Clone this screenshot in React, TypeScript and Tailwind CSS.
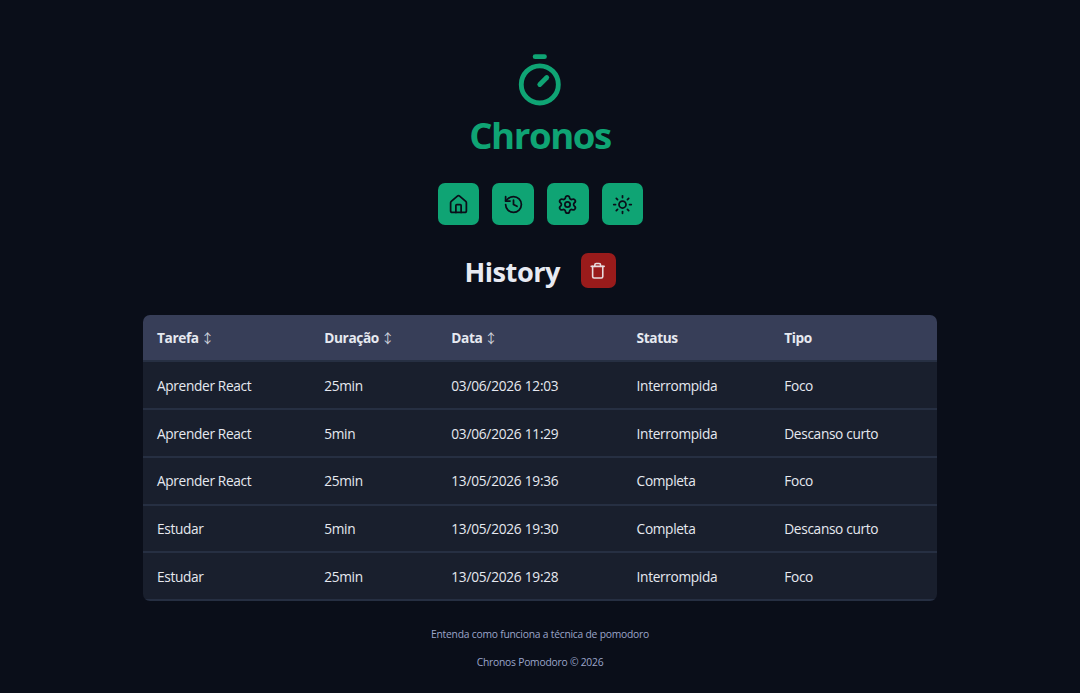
import { History, House, Settings, Sun, Timer, Trash } from "lucide-react";

interface Task {
  name: string;
  duration: string;
  date: string;
  status: string;
  type: string;
}

const tasks: Task[] = [
  { name: "Aprender React", duration: "25min", date: "03/06/2026 12:03", status: "Interrompida", type: "Foco" },
  { name: "Aprender React", duration: "5min", date: "03/06/2026 11:29", status: "Interrompida", type: "Descanso curto" },
  { name: "Aprender React", duration: "25min", date: "13/05/2026 19:36", status: "Completa", type: "Foco" },
  { name: "Estudar", duration: "5min", date: "13/05/2026 19:30", status: "Completa", type: "Descanso curto" },
  { name: "Estudar", duration: "25min", date: "13/05/2026 19:28", status: "Interrompida", type: "Foco" },
];

const columns = [
  { label: "Tarefa", sortable: true, width: "w-[167.3px]" },
  { label: "Duração", sortable: true, width: "w-[127px]" },
  { label: "Data", sortable: true, width: "w-[185.3px]" },
  { label: "Status", sortable: false, width: "w-[147.7px]" },
  { label: "Tipo", sortable: false, width: "w-auto" },
];

const menu = [
  { label: "Home", Icon: House },
  { label: "Histórico", Icon: History },
  { label: "Configurações", Icon: Settings },
  { label: "Mudar tema", Icon: Sun },
];

function Logo() {
  return (
    <a href="#" className="flex flex-col items-center text-[#0fa474]">
      <Timer size={55.6} strokeWidth={2.1} />
      <span className="mt-[2px] text-[36.6px] leading-[50px] font-bold tracking-[-1.4px]">Chronos</span>
    </a>
  );
}

function Menu() {
  return (
    <nav className="mt-[23.9px] flex gap-[13px] pl-px">
      {menu.map(({ label, Icon }) => (
        <a
          key={label}
          href="#"
          aria-label={label}
          className="flex h-[41.6px] w-[41.6px] items-center justify-center rounded-[7px] bg-[#0fa474] text-[#0a0e19]"
        >
          <Icon size={21} />
        </a>
      ))}
    </nav>
  );
}

function TaskTable() {
  return (
    <div className="mt-[26.8px] w-[794px] overflow-hidden rounded-[7px]">
      <table className="w-full table-fixed border-collapse text-left text-[13.7px] text-[#e6e9f0]">
        <thead className="bg-[#373e58]">
          <tr className="h-[46.6px] border-b-2 border-[#262f42]">
            {columns.map((col) => (
              <th
                key={col.label}
                className={`px-[14px] pt-[2px] font-bold tracking-[-0.4px] whitespace-nowrap ${col.width}`}
              >
                {col.label}
                {col.sortable && (
                  <span className="ml-[2px] font-['Noto_Sans_CJK_JP','DejaVu_Sans',sans-serif] text-[13.5px] leading-none font-normal text-[#cfd3dd]">↕</span>
                )}
              </th>
            ))}
          </tr>
        </thead>
        <tbody className="bg-[#191f2d] tracking-[-0.34px]">
          {tasks.map((task) => (
            <tr key={task.date} className="h-[47.7px] border-b-2 border-[#262f42]">
              <td className="px-[14px] pt-[2px]">{task.name}</td>
              <td className="px-[14px] pt-[2px]">{task.duration}</td>
              <td className="px-[14px] pt-[2px] tracking-[-0.25px]">{task.date}</td>
              <td className="px-[14px] pt-[2px]">{task.status}</td>
              <td className="px-[14px] pt-[2px]">{task.type}</td>
            </tr>
          ))}
        </tbody>
      </table>
    </div>
  );
}

export default function App() {
  return (
    <div className="flex h-[693px] flex-col items-center overflow-hidden bg-[#0a0e19] pt-[52px] font-['Segoe_UI','Open_Sans',sans-serif]">
      <Logo />
      <Menu />
      <div className="mt-[28px] flex h-[35px] items-center gap-[20.5px]">
        <h1 className="pt-[2px] text-[27.2px] leading-[35px] font-bold tracking-[-0.5px] text-[#e8eaf2]">History</h1>
        <button
          type="button"
          aria-label="Apagar histórico"
          className="flex h-[35px] w-[35px] items-center justify-center rounded-[7px] bg-[#991b1b] text-[#e8dcde]"
        >
          <Trash size={17.4} strokeWidth={2.2} />
        </button>
      </div>
      <TaskTable />
      <footer className="mt-[20px] flex flex-col items-center text-[10.3px] leading-[27.8px] tracking-[-0.22px] text-[#9ba5c9]">
        <a href="#">Entenda como funciona a técnica de pomodoro</a>
        <a href="#">Chronos Pomodoro © 2026</a>
      </footer>
    </div>
  );
}
